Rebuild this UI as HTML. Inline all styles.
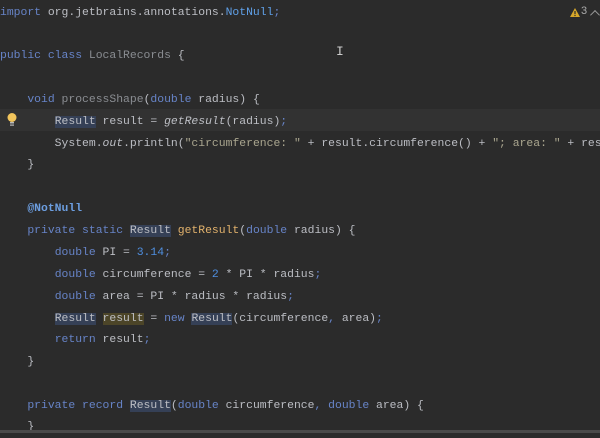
<!DOCTYPE html><html><head><style>
html,body{margin:0;padding:0;background:#2b2b2b;width:600px;height:433px;overflow:hidden}
.ed{position:absolute;left:0;top:1px;font-family:"Liberation Mono",monospace;font-size:11.4px;color:#bcbec4;white-space:pre}
.l{position:absolute;left:0;height:22px;line-height:22px}
.k{color:#6784c8}.m{color:#e2b26c}.n{color:#4f8fe0}.a{color:#6c9ee0;font-weight:bold}.g{color:#8a8d92}
.s{color:#aaa68f}
.r{background:#354056}.y{background:#4c4528}
.i{font-style:italic}
.hl{position:absolute;left:0;top:109px;width:600px;height:22px;background:#323232}
</style></head><body>
<div class="hl"></div>
<div class="ed">
<div class="l" style="top:1px"><span class="k">import</span> org.jetbrains.annotations.<span style="color:#5fa0e8">NotNull</span><span class="k">;</span></div>
<div class="l" style="top:44px"><span class="k">public class</span> <span class="g">LocalRecords</span> {</div>
<div class="l" style="top:88px">    <span class="k">void</span> <span class="g">processShape</span>(<span class="k">double</span> radius) {</div>
<div class="l" style="top:110px">        <span class="r">Result</span> result = <span class="i">getResult</span>(radius)<span class="k">;</span></div>
<div class="l" style="top:132px">        System.<span class="i">out</span>.println(<span class="s">"circumference: "</span> + result.circumference() + <span class="s">"; area: "</span> + result</div>
<div class="l" style="top:153px">    }</div>
<div class="l" style="top:197px">    <span class="a">@NotNull</span></div>
<div class="l" style="top:219px">    <span class="k">private static</span> <span class="r">Result</span> <span class="m">getResult</span>(<span class="k">double</span> radius) {</div>
<div class="l" style="top:241px">        <span class="k">double</span> PI = <span class="n">3.14</span><span class="k">;</span></div>
<div class="l" style="top:263px">        <span class="k">double</span> circumference = <span class="n">2</span> * PI * radius<span class="k">;</span></div>
<div class="l" style="top:285px">        <span class="k">double</span> area = PI * radius * radius<span class="k">;</span></div>
<div class="l" style="top:307px">        <span class="r">Result</span> <span class="y">result</span> = <span class="k">new</span> <span class="r">Result</span>(circumference<span class="k">,</span> area)<span class="k">;</span></div>
<div class="l" style="top:328px">        <span class="k">return</span> result<span class="k">;</span></div>
<div class="l" style="top:350px">    }</div>
<div class="l" style="top:394px">    <span class="k">private record</span> <span class="r">Result</span>(<span class="k">double</span> circumference<span class="k">,</span> <span class="k">double</span> area) {</div>
<div class="l" style="top:415px">    }</div>
</div>
<svg style="position:absolute;left:6px;top:112px" width="12" height="15"><circle cx="6" cy="5.5" r="4.5" fill="#f2c55c"/><rect x="4" y="10" width="4" height="1.5" fill="#bbb"/><rect x="4" y="12.5" width="4" height="1.2" fill="#bbb"/></svg>
<svg style="position:absolute;left:570px;top:8px" width="10" height="9"><path d="M5 0 L10 9 L0 9Z" fill="#d6a72a"/><rect x="4.4" y="3" width="1.2" height="3.2" fill="#2b2b2b"/><rect x="4.4" y="7" width="1.2" height="1.1" fill="#2b2b2b"/></svg>
<div style="position:absolute;left:581px;top:5px;font:11px 'Liberation Sans',sans-serif;color:#aaa">3</div>
<div style="position:absolute;width:6px;height:6px;border-left:1px solid #999;border-top:1px solid #999;transform:rotate(45deg);transform-origin:0 0;left:595px;top:10px"></div>
<div style="position:absolute;left:336px;top:44px;font:13px 'Liberation Mono',monospace;color:#ccc">I</div>
<div style="position:absolute;left:0;top:430px;width:600px;height:3px;background:#4a4a4a"></div>
</body></html>
